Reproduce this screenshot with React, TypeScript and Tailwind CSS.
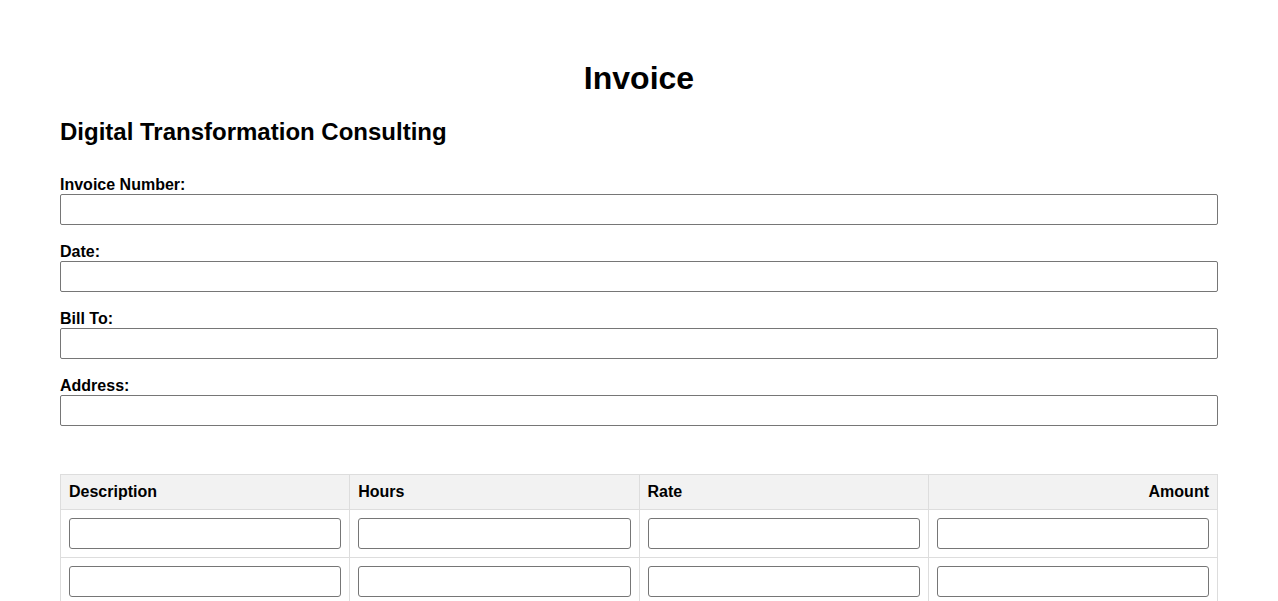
import React from 'react';

const fields = ['Invoice Number:', 'Date:', 'Bill To:', 'Address:'];
const columns = ['Description', 'Hours', 'Rate', 'Amount'];
const rows = [0, 1, 2];

export default function App() {
  return (
    <div className="min-h-screen bg-white px-[60px] pt-[60px] pb-10 text-black" style={{ fontFamily: '"Liberation Sans", Arial, sans-serif' }}>
      <h1 className="text-center text-[32px] leading-[37px] font-bold">Invoice</h1>
      <h2 className="mt-[21px] text-[24px] leading-[28px] font-bold">Digital Transformation Consulting</h2>

      <form className="mt-[30px]">
        {fields.map(label => (
          <div key={label} className="mb-[18px]">
            <label className="block text-[16px] leading-[18px] font-bold">{label}</label>
            <input
              type="text"
              className="block h-[31px] w-full rounded-[2px] border border-[#767676] px-2 text-[16px] outline-none"
            />
          </div>
        ))}

        <table className="mt-[48px] w-full table-fixed border-collapse">
          <thead>
            <tr className="bg-[#f2f2f2]">
              {columns.map(col => (
                <th
                  key={col}
                  className={`border border-[#dddddd] px-2 py-2 text-[16px] leading-[18px] font-bold ${col === 'Amount' ? 'text-right' : 'text-left'}`}
                >
                  {col}
                </th>
              ))}
            </tr>
          </thead>
          <tbody>
            {rows.map(r => (
              <tr key={r}>
                {columns.map(col => (
                  <td key={col} className="border border-[#dddddd] px-2 py-2">
                    <input
                      type="text"
                      className="block h-[31px] w-full rounded-[3px] border border-[#767676] px-2 text-[16px] outline-none"
                    />
                  </td>
                ))}
              </tr>
            ))}
          </tbody>
        </table>
      </form>
    </div>
  );
}
